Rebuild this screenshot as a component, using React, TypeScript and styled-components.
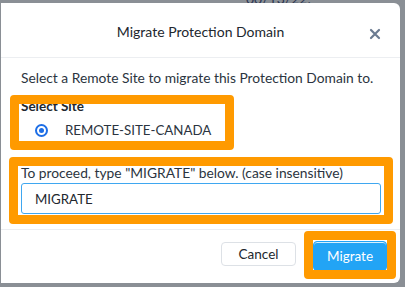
import React, { useState } from 'react';
import styled, { createGlobalStyle } from 'styled-components';

const GlobalStyle = createGlobalStyle`
  html, body {
    margin: 0;
    padding: 0;
    background: #8a8f95;
    font-family: Lato, "Open Sans", sans-serif;
    color: #2b3440;
    overflow: hidden;
  }
  * { box-sizing: border-box; }
`;

const Page = styled.div`
  position: relative;
  width: 405px;
  height: 287px;
  padding: 3px 5px 0 1px;
`;

const BackdropText = styled.div`
  position: absolute;
  top: -8px;
  left: 246px;
  font-size: 14px;
  line-height: 14px;
  color: #2a3550;
`;

const Modal = styled.div`
  position: relative;
  width: 399px;
  height: 280px;
  background: #fff;
  border-radius: 0 6px 6px 0;
  display: flex;
  flex-direction: column;
`;

const Header = styled.div`
  height: 55px;
  border-bottom: 1px solid #eceef1;
  display: flex;
  align-items: center;
  justify-content: center;
  position: relative;
  padding-top: 3px;
`;

const Title = styled.h2`
  margin: 0;
  font-size: 14px;
  font-weight: 400;
  color: #22272e;
`;

const Close = styled.button`
  position: absolute;
  right: 19px;
  top: 25px;
  width: 12px;
  height: 12px;
  padding: 0;
  border: 0;
  background: none;
  display: flex;
`;

const Body = styled.div`
  padding: 11px 20px 14px 20px;
  font-size: 13.8px;
  line-height: 18px;
  flex: 1;
`;

const Description = styled.p`
  margin: 0 0 10px 0;
`;

const FieldLabel = styled.div<{ bold?: boolean }>`
  font-weight: ${(p) => (p.bold ? 700 : 400)};
  font-size: ${(p) => (p.bold ? '13.5px' : '13.8px')};
  color: ${(p) => (p.bold ? '#22272e' : '#2b3440')};
`;

const RadioRow = styled.label`
  display: flex;
  align-items: center;
  gap: 17px;
  height: 20px;
  margin: 5px 0 24px 14px;
  font-size: 13.3px;
`;

const RadioDot = styled.span`
  width: 13px;
  height: 13px;
  border-radius: 50%;
  border: 2px solid #1d6ee6;
  display: flex;
  align-items: center;
  justify-content: center;

  &::after {
    content: '';
    width: 5px;
    height: 5px;
    border-radius: 50%;
    background: #1d6ee6;
  }
`;

const Input = styled.input`
  display: block;
  width: 360px;
  height: 31px;
  margin-top: 1px;
  border: 1px solid #3fa7f0;
  border-radius: 3px;
  padding: 0 13px;
  font-family: inherit;
  font-size: 13.3px;
  color: #22272e;
  outline: none;
  caret-color: #22272e;
`;

const Footer = styled.div`
  height: 54px;
  border-top: 1px solid #eceef1;
  display: flex;
  justify-content: flex-end;
  align-items: flex-start;
  gap: 17px;
  padding: 11px 13px 0 0;
`;

const Button = styled.button<{ primary?: boolean }>`
  height: ${(p) => (p.primary ? '30px' : '24px')};
  margin-top: ${(p) => (p.primary ? '0' : '1px')};
  width: ${(p) => (p.primary ? '74px' : '75px')};
  border-radius: 4px;
  font-family: inherit;
  font-size: 13.5px;
  border: 1px solid ${(p) => (p.primary ? '#22a4f5' : '#dde1e6')};
  background: ${(p) => (p.primary ? '#22a4f5' : '#fff')};
  color: ${(p) => (p.primary ? '#fff' : '#22272e')};
  box-shadow: ${(p) => (p.primary ? 'inset 0 1px 0 #d8effd' : 'none')};
`;

const Highlight = styled.div<{ x: number; y: number; w: number; h: number }>`
  position: absolute;
  left: ${(p) => p.x}px;
  top: ${(p) => p.y}px;
  width: ${(p) => p.w}px;
  height: ${(p) => p.h}px;
  border: 9px solid #ff9a00;
  border-radius: 4px;
  pointer-events: none;
`;

const CloseIcon = () => (
  <svg width="12" height="12" viewBox="0 0 12 12">
    <path d="M2 2 L10 10 M10 2 L2 10" stroke="#6b7b91" strokeWidth="2.2" strokeLinecap="round" />
  </svg>
);

export default function App() {
  const [value, setValue] = useState('MIGRATE');

  return (
    <>
      <GlobalStyle />
      <Page>
        <BackdropText>00/13/22.</BackdropText>
        <Modal>
          <Header>
            <Title>Migrate Protection Domain</Title>
            <Close aria-label="Close">
              <CloseIcon />
            </Close>
          </Header>
          <Body>
            <Description>Select a Remote Site to migrate this Protection Domain to.</Description>
            <FieldLabel bold>Select Site</FieldLabel>
            <RadioRow>
              <RadioDot />
              <span>REMOTE-SITE-CANADA</span>
            </RadioRow>
            <FieldLabel>To proceed, type "MIGRATE" below. (case insensitive)</FieldLabel>
            <Input value={value} onChange={(e) => setValue(e.target.value)} autoFocus />
          </Body>
          <Footer>
            <Button>Cancel</Button>
            <Button primary>Migrate</Button>
          </Footer>
          <Highlight x={9} y={92} w={224} h={55} />
          <Highlight x={8} y={154} w={384} h={67} />
          <Highlight x={303} y={228} w={92} h={48} />
        </Modal>
      </Page>
    </>
  );
}
